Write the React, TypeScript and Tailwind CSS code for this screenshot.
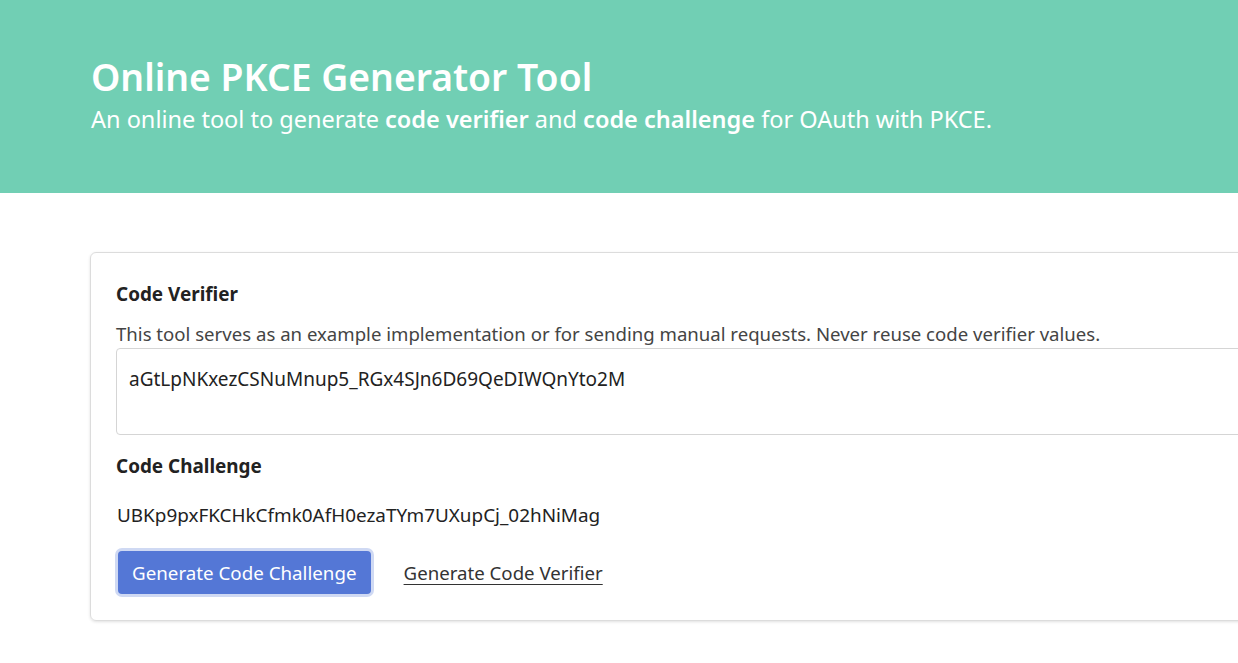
export default function App() {
  return (
    <div className="min-h-[663px] w-[1238px] overflow-hidden bg-white text-[#333] font-['Noto_Sans',sans-serif]">
      <header className="h-[193px] bg-[#71cfb4] pl-[91px] pt-[52px] text-white">
        <h1 className="text-[37.3px] font-semibold leading-[50px]">Online PKCE Generator Tool</h1>
        <p className="mt-[1px] text-[23.5px] leading-[32px]">
          An online tool to generate <b className="font-semibold">code verifier</b> and{" "}
          <b className="font-semibold">code challenge</b> for OAuth with PKCE.
        </p>
      </header>
      <main className="pl-[90px] pt-[59px]">
        <div className="w-[1200px] rounded-[6px] border border-[#dcdcdc] shadow-[0_1px_3px_rgba(0,0,0,0.12)] pl-[25px] pt-[28px] pb-[26px]">
          <div className="text-[18.9px] font-bold leading-[26px] text-[#222]">Code Verifier</div>
          <p className="mt-[14px] text-[18.6px] leading-[26px] text-[#444]">
            This tool serves as an example implementation or for sending manual requests. Never reuse code verifier values.
          </p>
          <div className="mt-[1px] h-[87px] rounded-[4px] border border-[#d5d5d5] px-[12px] pt-[17px] text-[19px] leading-[26px] text-[#222]">
            aGtLpNKxezCSNuMnup5_RGx4SJn6D69QeDIWQnYto2M
          </div>
          <div className="mt-[18px] text-[18.9px] font-bold leading-[26px] text-[#222]">Code Challenge</div>
          <div className="mt-[23px] pl-[1px] text-[18.9px] leading-[26px] text-[#222]">
            UBKp9pxFKCHkCfmk0AfH0ezaTYm7UXupCj_02hNiMag
          </div>
          <div className="mt-[23px] flex items-center gap-[33px]">
            <button className="ml-[2px] h-[43px] rounded-[4px] bg-[#5477d6] px-[14px] pt-[2px] text-[18.75px] text-white ring-[3px] ring-[#cfd9f3]">
              Generate Code Challenge
            </button>
            <a className="pt-[1px] text-[18.65px] text-[#333] underline underline-offset-[4px]" href="#">
              Generate Code Verifier
            </a>
          </div>
        </div>
      </main>
    </div>
  );
}
